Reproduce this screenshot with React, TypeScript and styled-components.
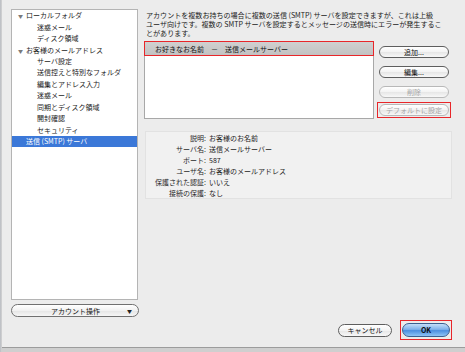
import { Fragment } from "react";
import styled, { createGlobalStyle } from "styled-components";

const GlobalStyle = createGlobalStyle`
  html, body {
    margin: 0;
    padding: 0;
    background: #d6d6d6;
  }
  body {
    font-family: "Noto Sans CJK JP", "Noto Sans", "Liberation Sans", sans-serif;
    color: #111;
  }
`;

const Frame = styled.div`
  width: 465px;
  height: 352px;
  display: flex;
  background: #cfcfcf;
  overflow: hidden;
`;

const EdgeStrip = styled.div`
  width: 4px;
  height: 100%;
  background: linear-gradient(90deg, #b9bcc2, #d4d4d4);
`;

const Window = styled.div`
  flex: 1;
  height: 348px;
  display: flex;
  gap: 5px;
  padding: 9px 13px 0 9px;
  box-sizing: border-box;
  background: #ececec;
  border-bottom: 1px solid #9c9c9c;
`;

const LeftColumn = styled.div`
  width: 128px;
  display: flex;
  flex-direction: column;
`;

const Sidebar = styled.div`
  width: 127px;
  height: 291px;
  box-sizing: border-box;
  background: #fff;
  border: 1px solid #b4b4b4;
  display: flex;
  flex-direction: column;
`;

const TreeRow = styled.div<{ $level: number; $selected?: boolean }>`
  height: 11.45px;
  display: flex;
  align-items: center;
  padding-left: ${(p) => (p.$level === 0 ? 3 : 25)}px;
  font-size: 7px;
  line-height: 1;
  white-space: nowrap;
  background: ${(p) => (p.$selected ? "#3b78d8" : "transparent")};
  color: ${(p) => (p.$selected ? "#fff" : "#1a1a1a")};
`;

const Disclosure = styled.span`
  width: 11px;
  font-size: 5px;
  color: #7a7a7a;
  text-align: center;
`;

const Spacer = styled.span`
  width: 11px;
`;

const PopupButton = styled.div`
  margin-top: 4px;
  height: 13px;
  box-sizing: border-box;
  border: 1px solid #707070;
  border-radius: 7px;
  background: linear-gradient(#ffffff, #f1f1f1 50%, #e4e4e4 51%, #f6f6f6);
  display: flex;
  align-items: center;
  font-size: 7px;
  padding: 0 6px 0 4px;
`;

const PopupLabel = styled.span`
  flex: 1;
  text-align: center;
  margin-left: 8px;
`;

const PopupArrow = styled.span`
  font-size: 5px;
  color: #222;
`;

const RightColumn = styled.div`
  flex: 1;
  display: flex;
  flex-direction: column;
  padding-top: 1.5px;
`;

const Intro = styled.p`
  margin: 0 0 0 2px;
  font-size: 7.05px;
  line-height: 9.2px;
  white-space: nowrap;
  color: #1a1a1a;
`;

const ListArea = styled.div`
  margin-top: 3px;
  display: flex;
  gap: 5px;
`;

const ServerList = styled.div`
  width: 230px;
  height: 78px;
  box-sizing: border-box;
  background: #fff;
  border: 1px solid #a8a8a8;
`;

const ServerRow = styled.div<{ $selected?: boolean }>`
  height: 15px;
  margin: -1px -1px 0;
  box-sizing: border-box;
  border: 1.5px solid ${(p) => (p.$selected ? "#e8262a" : "transparent")};
  background: ${(p) =>
    p.$selected ? "linear-gradient(#d0d0d0, #c2c2c2)" : "transparent"};
  display: flex;
  align-items: center;
  padding-left: 10px;
  font-size: 7px;
  white-space: pre;
`;

const ButtonColumn = styled.div`
  width: 73px;
  display: flex;
  flex-direction: column;
  align-items: flex-start;
  padding-top: 5px;
`;

const PushButton = styled.div<{
  $disabled?: boolean;
  $width?: number;
  $height?: number;
  $gap?: number;
}>`
  width: ${(p) => p.$width ?? 70}px;
  height: ${(p) => p.$height ?? 12}px;
  box-sizing: border-box;
  margin-bottom: ${(p) => p.$gap ?? 8}px;
  border: 1px solid ${(p) => (p.$disabled ? "#b8b8b8" : "#5e5e5e")};
  border-radius: 7px;
  background: linear-gradient(#ffffff, #f3f3f3 50%, #e6e6e6 51%, #f8f8f8);
  color: ${(p) => (p.$disabled ? "#a6a6a6" : "#111")};
  font-size: 7px;
  display: flex;
  align-items: center;
  justify-content: center;
  white-space: nowrap;
`;

const Highlight = styled.div`
  margin-top: -4px;
  margin-left: -2px;
  padding: 1px;
  border: 1.5px solid #e8262a;
`;

const Details = styled.div`
  margin-top: 12px;
  margin-left: 1px;
  display: grid;
  grid-template-columns: 60px 1fr;
  column-gap: 3px;
  grid-auto-rows: 11px;
  align-items: center;
  background: #f1f1f1;
  border: 1px solid #e2e2e2;
  font-size: 7px;
`;

const DetailLabel = styled.span`
  text-align: right;
  color: #2a2a2a;
  white-space: nowrap;
`;

const DetailValue = styled.span`
  color: #1a1a1a;
  white-space: nowrap;
`;

const Footer = styled.div`
  margin-top: auto;
  margin-bottom: 7px;
  display: flex;
  justify-content: flex-end;
  align-items: center;
  gap: 8px;
`;

const OkFrame = styled.div`
  padding: 2px 1px;
  border: 1.5px solid #e8262a;
`;

const OkButton = styled.div`
  width: 48px;
  height: 14px;
  box-sizing: border-box;
  border: 1px solid #3c5f8f;
  border-radius: 7px;
  background: linear-gradient(#c4def8, #7fb2ea 45%, #4c8fe0 55%, #8ec4f5);
  font-size: 7px;
  font-weight: bold;
  display: flex;
  align-items: center;
  justify-content: center;
  color: #111;
`;

const tree = [
  { label: "ローカルフォルダ", level: 0 },
  { label: "迷惑メール", level: 1 },
  { label: "ディスク領域", level: 1 },
  { label: "お客様のメールアドレス", level: 0 },
  { label: "サーバ設定", level: 1 },
  { label: "送信控えと特別なフォルダ", level: 1 },
  { label: "編集とアドレス入力", level: 1 },
  { label: "迷惑メール", level: 1 },
  { label: "同期とディスク領域", level: 1 },
  { label: "開封確認", level: 1 },
  { label: "セキュリティ", level: 1 },
  { label: "送信 (SMTP) サーバ", level: 0, selected: true, leaf: true },
];

const details = [
  ["説明:", "お客様のお名前"],
  ["サーバ名:", "送信メールサーバー"],
  ["ポート:", "587"],
  ["ユーザ名:", "お客様のメールアドレス"],
  ["保護された認証:", "いいえ"],
  ["接続の保護:", "なし"],
];

const App = () => {
  return (
    <>
      <GlobalStyle />
      <Frame>
        <EdgeStrip />
        <Window>
          <LeftColumn>
            <Sidebar>
              {tree.map((item, i) => (
                <TreeRow key={i} $level={item.level} $selected={item.selected}>
                  {item.level === 0 &&
                    (item.leaf ? <Spacer /> : <Disclosure>▼</Disclosure>)}
                  {item.label}
                </TreeRow>
              ))}
            </Sidebar>
            <PopupButton>
              <PopupLabel>アカウント操作</PopupLabel>
              <PopupArrow>▼</PopupArrow>
            </PopupButton>
          </LeftColumn>

          <RightColumn>
            <Intro>
              アカウントを複数お持ちの場合に複数の送信 (SMTP) サーバを設定できますが、これは上級
              <br />
              ユーザ向けです。複数の SMTP サーバを設定するとメッセージの送信時にエラーが発生するこ
              <br />
              とがあります。
            </Intro>

            <ListArea>
              <ServerList>
                <ServerRow $selected>お好きなお名前　－　送信メールサーバー</ServerRow>
              </ServerList>
              <ButtonColumn>
                <PushButton>追加...</PushButton>
                <PushButton>編集...</PushButton>
                <PushButton $disabled>削除</PushButton>
                <Highlight>
                  <PushButton $disabled $gap={0}>
                    デフォルトに設定
                  </PushButton>
                </Highlight>
              </ButtonColumn>
            </ListArea>

            <Details>
              {details.map(([label, value]) => (
                <Fragment key={label}>
                  <DetailLabel>{label}</DetailLabel>
                  <DetailValue>{value}</DetailValue>
                </Fragment>
              ))}
            </Details>

            <Footer>
              <PushButton $width={54} $height={13} $gap={0}>
                キャンセル
              </PushButton>
              <OkFrame>
                <OkButton>OK</OkButton>
              </OkFrame>
            </Footer>
          </RightColumn>
        </Window>
      </Frame>
    </>
  );
};

export default App;
